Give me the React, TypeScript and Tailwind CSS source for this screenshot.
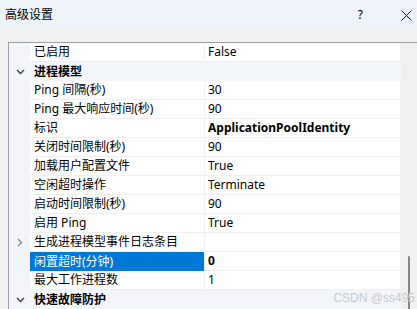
import React from "react";

type Row = {
  label: string;
  value?: string;
  kind?: "cat-open" | "cat-closed-item" | "item";
  bold?: boolean;
  selected?: boolean;
};

const rows: Row[] = [
  { label: "已启用", value: "False" },
  { label: "进程模型", kind: "cat-open" },
  { label: "Ping 间隔(秒)", value: "30" },
  { label: "Ping 最大响应时间(秒)", value: "90" },
  { label: "标识", value: "ApplicationPoolIdentity", bold: true },
  { label: "关闭时间限制(秒)", value: "90" },
  { label: "加载用户配置文件", value: "True" },
  { label: "空闲超时操作", value: "Terminate" },
  { label: "启动时间限制(秒)", value: "90" },
  { label: "启用 Ping", value: "True" },
  { label: "生成进程模型事件日志条目", value: "", kind: "cat-closed-item" },
  { label: "闲置超时(分钟)", value: "0", bold: true, selected: true },
  { label: "最大工作进程数", value: "1" },
  { label: "快速故障防护", kind: "cat-open" },
];

function ChevronDown() {
  return (
    <svg width="9" height="6" viewBox="0 0 9 6" className="block">
      <path d="M1 1 L4.5 4.5 L8 1" fill="none" stroke="#404040" strokeWidth="1.4" />
    </svg>
  );
}

function ChevronRight() {
  return (
    <svg width="6" height="9" viewBox="0 0 6 9" className="block">
      <path d="M1 1 L4.5 4.5 L1 8" fill="none" stroke="#8a8a8a" strokeWidth="1.3" />
    </svg>
  );
}

export default function App() {
  return (
    <div
      className="relative w-[417px] h-[309px] overflow-hidden bg-[#f0f0f0] text-[12px] text-black"
      style={{ fontFamily: '"Noto Sans", "Noto Sans CJK SC", sans-serif' }}
    >
      {/* Title bar */}
      <div className="h-[30px] bg-[#eef2f9] flex items-center pl-[5px]">
        <span className="text-[12px] leading-[16px]">高级设置</span>
        <span className="ml-auto mr-[38px] text-[12px] leading-[16px]">?</span>
        <svg width="11" height="11" viewBox="0 0 11 11" className="mr-[5px] block">
          <path d="M0.5 0.5 L10.5 10.5 M10.5 0.5 L0.5 10.5" stroke="#1a1a1a" strokeWidth="1" />
        </svg>
      </div>
      <div className="h-[12px]" />
      {/* Property grid */}
      <div className="ml-[8px] border-l border-t border-[#a0a0a0] flex">
        <div className="w-[392px] flex flex-col bg-white">
          {rows.map((r, i) => {
            if (r.kind === "cat-open") {
              return (
                <div key={i} className="h-[19px] flex bg-[#f2f5fa]">
                  <div className="w-[21px] flex items-center justify-center pl-[1px]">
                    <ChevronDown />
                  </div>
                  <div className="pl-[4px] font-bold leading-[19px] whitespace-nowrap">{r.label}</div>
                </div>
              );
            }
            return (
              <div key={i} className="h-[19px] flex">
                <div className="w-[21px] bg-[#f2f5fa] flex items-center justify-center">
                  {r.kind === "cat-closed-item" ? <ChevronRight /> : null}
                </div>
                <div
                  className={
                    r.selected
                      ? "w-[174px] bg-[#0078d7] text-white pl-[4px] leading-[19px] whitespace-nowrap"
                      : "w-[174px] border-b border-[#f0f0f0] pl-[4px] leading-[18px] whitespace-nowrap"
                  }
                >
                  {r.label}
                </div>
                <div className="w-[1px] bg-[#f0f0f0]" />
                <div
                  className={
                    "flex-1 border-b border-[#f0f0f0] pl-[3px] leading-[18px] whitespace-nowrap " +
                    (r.bold ? "font-bold" : "")
                  }
                >
                  {r.value}
                </div>
                <div className="w-[1px] bg-[#f0f0f0]" />
              </div>
            );
          })}
        </div>
        <div className="flex-1 bg-[#f0f0f0] relative">
          <div className="absolute left-[7px] top-[213px] w-[2px] h-[60px] bg-[#858585] rounded-[1px]" />
        </div>
      </div>
      {/* Watermark */}
      <div
        className="absolute right-[2px] bottom-[4px] text-[12px] leading-[14px] text-[#c8c8c8]"
        style={{ fontFamily: '"Liberation Sans", sans-serif', textShadow: "0 0 1px #ffffff" }}
      >
        CSDN @ss495
      </div>
    </div>
  );
}
